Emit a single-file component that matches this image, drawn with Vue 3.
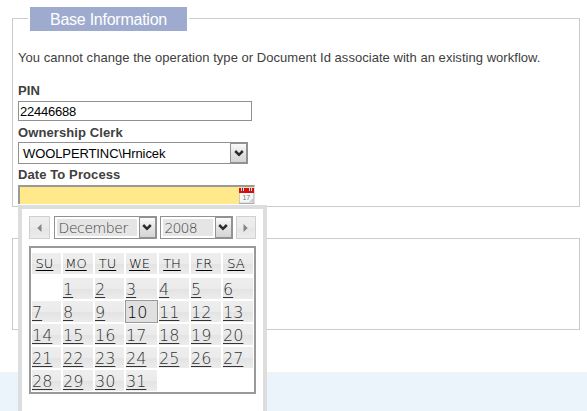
<script setup>
const heads = ['SU', 'MO', 'TU', 'WE', 'TH', 'FR', 'SA']
const days = Array.from({ length: 31 }, (_, i) => i + 1)
const selected = 10
</script>

<template>
  <div class="page">
    <section class="panel base">
      <h2 class="legend"><span>Base Information</span></h2>
      <p class="note"><span class="t-note">You cannot change the operation type or Document Id associate with an existing workflow.</span></p>
      <label class="label pin">PIN</label>
      <div class="input">22446688</div>
      <label class="label owner">Ownership Clerk</label>
      <div class="select clerk">
        <span class="clerk-name">WOOLPERTINC\Hrnicek</span>
        <span class="drop"><svg width="10" height="7" viewBox="0 0 10 7"><path d="M1.2 1 5 4.8 8.8 1" /></svg></span>
      </div>
      <label class="label date">Date To Process</label>
      <div class="date-input">
        <svg class="cal-icon" width="15" height="17" viewBox="0 0 15 17">
          <rect x="0.5" y="1.5" width="14" height="14.5" fill="#f7f7f7" stroke="#c9c9c9" />
          <path d="M0 16h15v1H0z" fill="#aaa" />
          <path d="M0 1h15v5H0z" fill="#d90d0d" />
          <path d="M2 0h3v4H2zM10 0h3v4h-3z" fill="#ddd" />
          <path d="M3 1h1v3H3zM11 1h1v3h-1z" fill="#7b3030" />
          <text x="3.4" y="13.4" font-size="7" fill="#777">17</text>
          <path d="M10 15l4-4v4z" fill="#ccc" />
        </svg>
        <div class="popup">
          <div class="nav">
            <span class="step"><svg width="5" height="8" viewBox="0 0 5 8"><path d="M4.5 0v8L0.3 4z" /></svg></span>
            <div class="select month">
              <span class="value"><span class="t-month">December</span></span>
              <span class="drop"><svg width="10" height="7" viewBox="0 0 10 7"><path d="M1.2 1 5 4.8 8.8 1" /></svg></span>
            </div>
            <div class="select year">
              <span class="value"><span class="t-year">2008</span></span>
              <span class="drop"><svg width="10" height="7" viewBox="0 0 10 7"><path d="M1.2 1 5 4.8 8.8 1" /></svg></span>
            </div>
            <span class="step next"><svg width="5" height="8" viewBox="0 0 5 8"><path d="M0.5 0v8L4.7 4z" /></svg></span>
          </div>
          <div class="calendar">
            <div class="row heads">
              <span v-for="h in heads" :key="h" class="head"><span class="num">{{ h }}</span></span>
            </div>
            <div class="row days">
              <span class="blank"></span>
              <span v-for="d in days" :key="d" class="day" :class="{ selected: d === selected }"><span class="num">{{ d }}</span></span>
            </div>
          </div>
        </div>
      </div>
    </section>
    <section class="panel second"></section>
    <footer class="footer"></footer>
  </div>
</template>

<style>
body { margin: 0; background: #fff; overflow: hidden; }
</style>

<style scoped>
* { box-sizing: border-box; }
.page {
  height: 411px;
  padding-top: 18px;
  display: flex;
  flex-direction: column;
  font-family: "Liberation Sans", Arial, sans-serif;
  color: #404040;
  overflow: hidden;
}
.panel { width: 568px; margin-left: 12px; border: 1px solid #ccc; flex: none; }
.base { height: 189px; padding-left: 5px; display: flex; flex-direction: column; }
.second { height: 92px; margin-top: 31px; }
.footer { margin-top: 42px; height: 39px; background: #ebf3fb; flex: none; }
.legend {
  margin: -12px 0 0 10px;
  width: 161px;
  height: 24px;
  flex: none;
  border: solid #fff;
  border-width: 0 2px;
  background: #9eabce;
  color: #fff;
  font-size: 16px;
  font-weight: 400;
  letter-spacing: -0.25px;
  line-height: 25px;
  padding-left: 20px;
  white-space: nowrap;
}
.note { margin: 18px 0 0; height: 18px; line-height: 18px; font-size: 13px; white-space: nowrap; flex: none; }
.t-note { letter-spacing: 0.038px; }
.label { font-size: 13px; font-weight: 700; height: 16px; line-height: 16px; letter-spacing: 0.1px; flex: none; white-space: nowrap; }
.pin { margin-top: 15px; height: 19px; line-height: 17px; }
.input { width: 234px; height: 20px; border: 1px solid #919191; color: #000; font-size: 13px; letter-spacing: -0.23px; line-height: 19px; padding-left: 1px; flex: none; }
.owner { height: 21px; line-height: 23px; }
.select { display: flex; border: 1px solid #919191; background: #fff; flex: none; }
.clerk { width: 230px; height: 22px; color: #000; font-size: 13px; line-height: 21px; padding-left: 4px; letter-spacing: -0.1px; }
.clerk-name { flex: 1; }
.drop {
  width: 17px;
  height: 100%;
  border: 1px solid #929292;
  background: linear-gradient(#fafafa, #e2e2e2 55%, #d5d5d5);
  display: flex;
  align-items: center;
  justify-content: center;
  flex: none;
}
.drop path { fill: none; stroke: #2b2b2b; stroke-width: 2.5; }
.date { height: 21px; line-height: 22px; }
.date-input {
  position: relative;
  width: 237px;
  height: 19px;
  flex: none;
  background: #ffe98a;
  border: solid #999;
  border-width: 2px 1px 0 2px;
  border-right-color: #ddd;
  display: flex;
  justify-content: flex-end;
}
.popup {
  position: absolute;
  left: -2px;
  top: 18px;
  width: 249px;
  height: 230px;
  border: 4px solid #ddd;
  background: #fff;
  padding: 7px;
  font-family: "DejaVu Sans", sans-serif;
}
.nav { display: flex; height: 23px; }
.step { width: 21px; height: 23px; border: 1px solid #d0d0d0; background: linear-gradient(#eee, #ebebeb 50%, #e5e5e5 52%, #ececec); display: flex; align-items: center; justify-content: center; }
.step path { fill: #858585; }
.month { width: 103px; height: 23px; margin-left: 4px; padding-left: 2px; }
.year { width: 73px; height: 23px; margin-left: 3px; padding-left: 2px; }
.next { margin-left: 3px; }
.value { flex: 1; margin: 2px 2px 2px 0; padding-left: 2px; background: #e5e5e5; color: #444; line-height: 18px; font-weight: 200; white-space: nowrap; overflow: hidden; }
.t-month { font-size: 14px; letter-spacing: -0.4px; }
.t-year { font-size: 14px; letter-spacing: -0.85px; }
.calendar { width: 227px; height: 148px; margin-top: 7px; border: 2px solid #999; padding: 5px 1px 0; }
.row { display: grid; grid-template-columns: 29px 30px 29px 31px 30px 30px 30px; gap: 2px; }
.heads { height: 19px; }
.head { background: linear-gradient(#eee, #ebebeb 50%, #e3e3e3 52%, #ececec); color: #000; font-size: 13px; font-weight: 200; line-height: 21px; text-align: center; padding-right: 4px; }
.days { margin-top: 6px; grid-auto-rows: 21px; }
.day { background: linear-gradient(#eee, #ebebeb 50%, #e3e3e3 52%, #ececec); color: #333; font-size: 16px; line-height: 24px; font-weight: 200; }
.num { text-decoration: underline; text-decoration-thickness: 1px; text-underline-offset: 2px; }
.selected { margin: -1px; border: 1px solid #999; background: #e0e0e0; color: #000; padding-left: 1px; }
.selected .num { text-decoration: none; }
</style>
